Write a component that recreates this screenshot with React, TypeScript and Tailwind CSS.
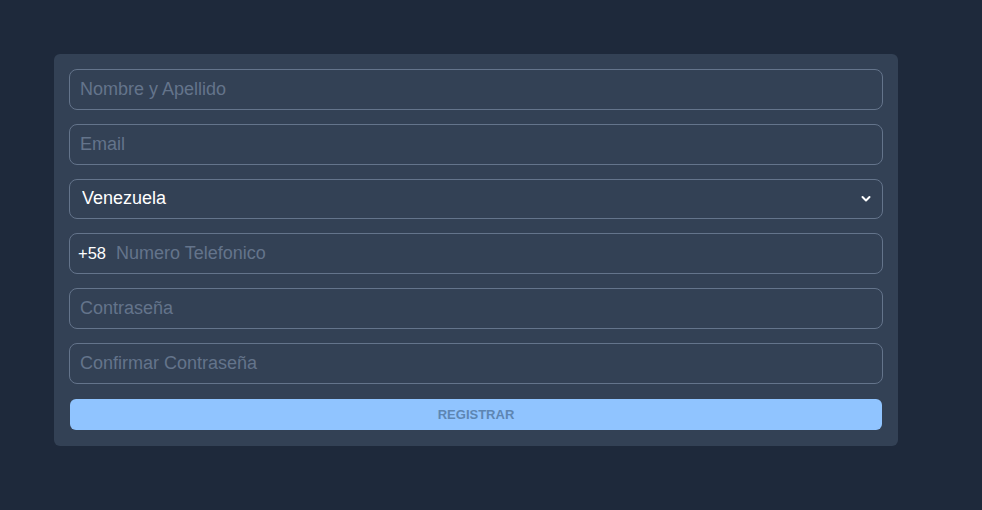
import React from 'react';

const field =
  'w-full h-[40.8px] rounded-lg border border-[#64748b] bg-[#334155] px-[10px] text-[18px] text-white placeholder-[#64748b] outline-none';

export default function App() {
  return (
    <div className="min-h-screen bg-[#1e293b] pt-[54px] pl-[54px]" style={{ fontFamily: '"Liberation Sans", Arial, sans-serif' }}>
      <form className="w-[844px] rounded-md bg-[#334155] px-[15px] pt-[15px] pb-[16px] flex flex-col gap-[14px]">
        <input className={field} placeholder="Nombre y Apellido" />
        <input className={field} placeholder="Email" />
        <div className="relative">
          <select className={field + ' appearance-none pl-[12px]'} defaultValue="VE">
            <option value="VE">Venezuela</option>
          </select>
          <svg className="absolute right-[12px] top-[16px] pointer-events-none" width="10" height="8" viewBox="0 0 10 8">
            <path d="M1.5 2 L5 5.5 L8.5 2" stroke="#fff" strokeWidth="2" fill="none" strokeLinecap="round" strokeLinejoin="round" />
          </svg>
        </div>
        <div className="flex items-center h-[40.8px] rounded-lg border border-[#64748b] bg-[#334155] pl-[8px]">
          <span className="text-[16.5px] text-white mr-[10px]">+58</span>
          <input className="flex-1 h-full bg-transparent text-[18px] text-white placeholder-[#64748b] outline-none" placeholder="Numero Telefonico" />
        </div>
        <input className={field} type="password" placeholder="Contraseña" />
        <input className={field} type="password" placeholder="Confirmar Contraseña" />
        <button
          type="button"
          className="mx-px mt-[1px] h-[31px] rounded-md bg-[#90c4ff] text-[13px] font-bold uppercase text-[#5d86b3]"
        >
          Registrar
        </button>
      </form>
    </div>
  );
}
